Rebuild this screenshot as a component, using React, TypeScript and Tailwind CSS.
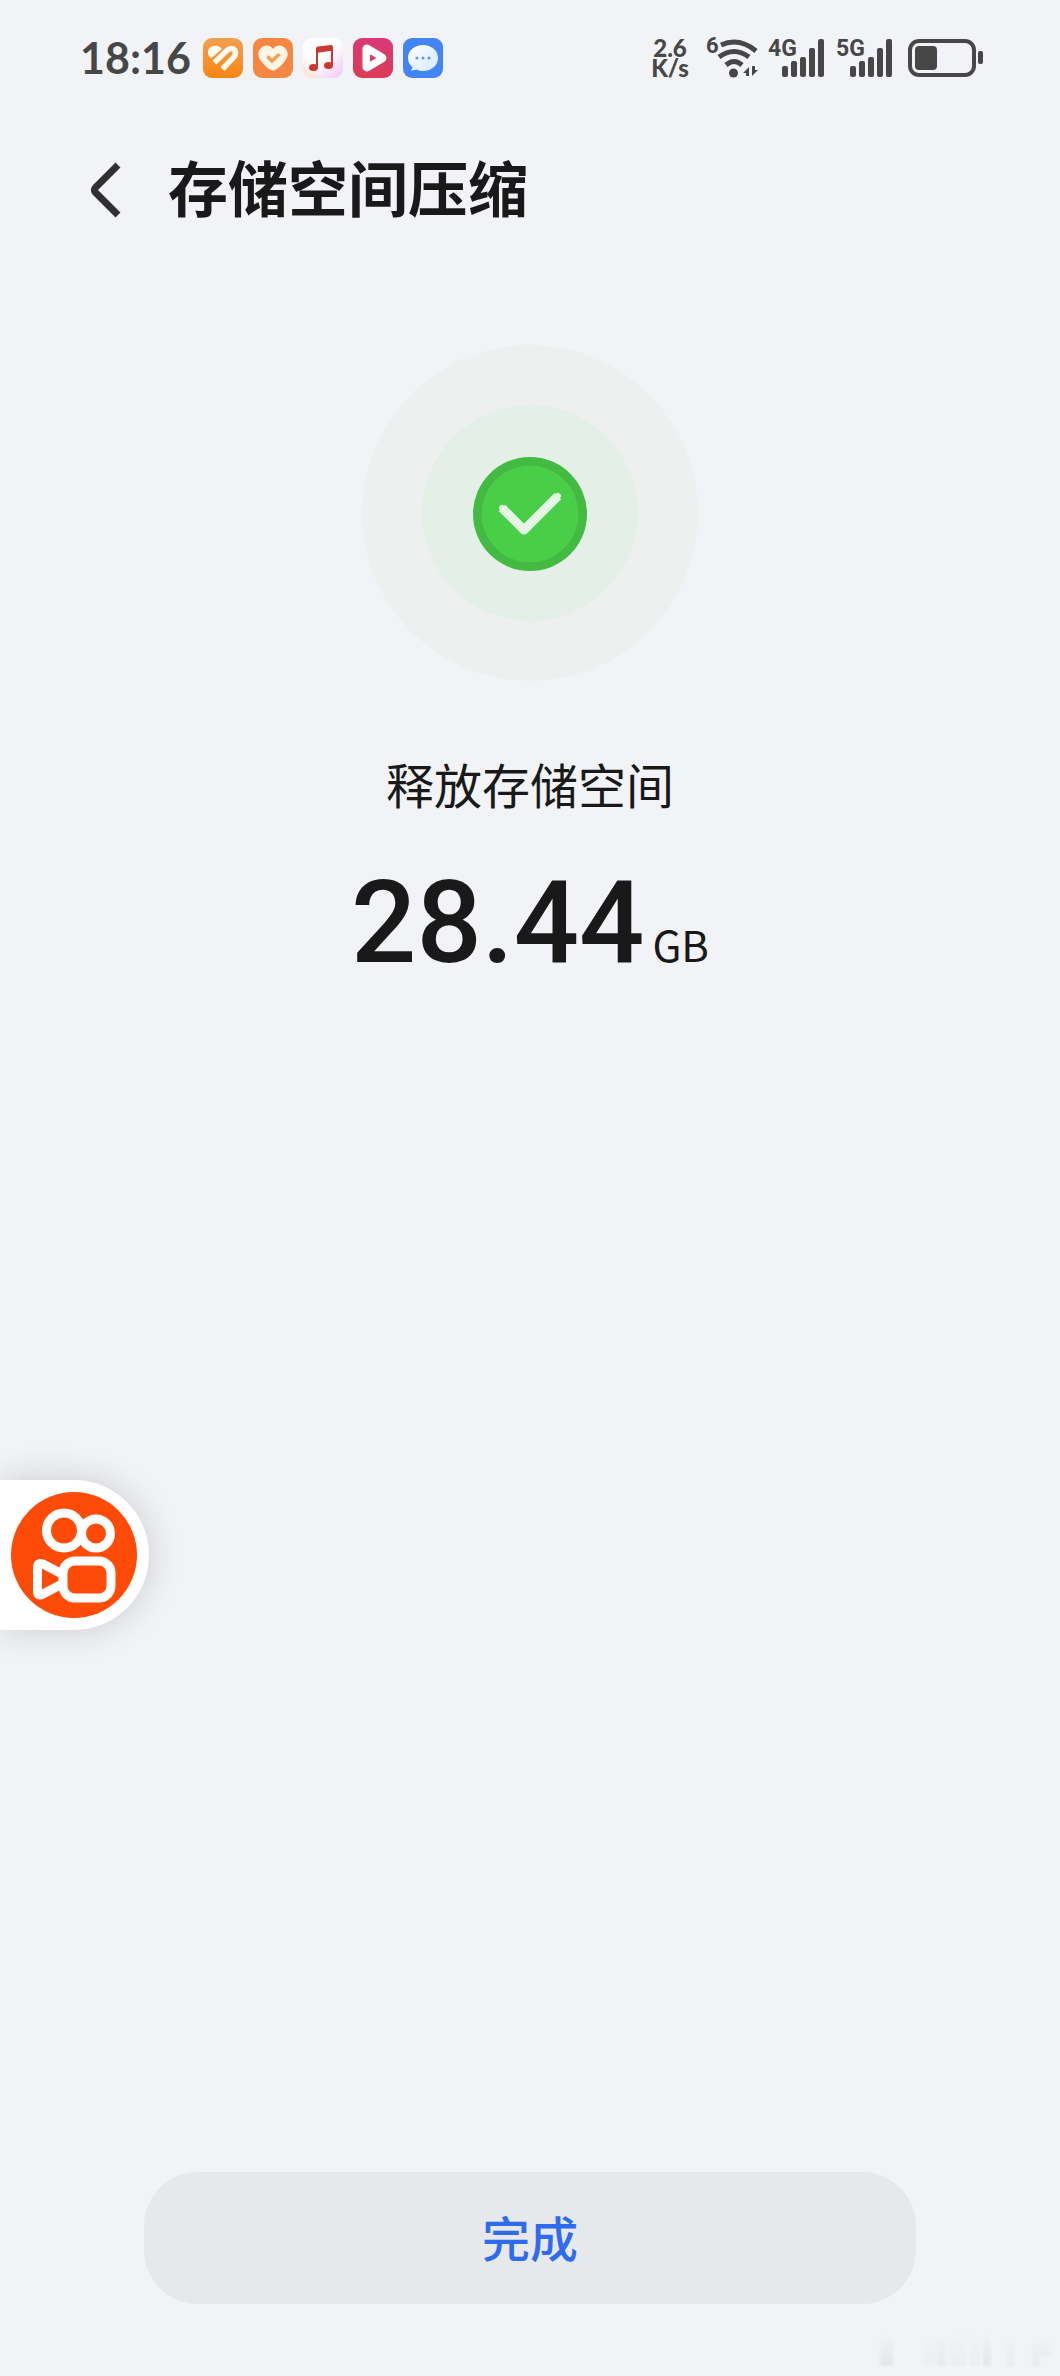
import React from 'react';

const AppIcons: React.FC = () => (
  <div className="flex gap-[10px]">
    <svg className="size-10" viewBox="0 0 40 40" aria-hidden="true">
      <defs>
        <linearGradient id="orange" x1="0" y1="0" x2="0" y2="1">
          <stop offset="0" stopColor="#f0a050" />
          <stop offset="1" stopColor="#fb8412" />
        </linearGradient>
      </defs>
      <rect width="40" height="40" rx="9" fill="url(#orange)" />
      <path d="M5.500 17 C3.500 11 8 7 13.500 7.800 Q17 8.300 19 11 L8.500 20 Q6.500 19.500 5.500 17 Z" fill="#fffaf0" />
      <path
        d="M11.500 24.500 L24 12.500 Q29 8.500 32 12.500 Q33.500 16 31 18.800 L19.500 31"
        fill="none"
        stroke="#fffaf0"
        strokeWidth="5.500"
        strokeLinejoin="round"
      />
    </svg>
    <svg className="size-10" viewBox="0 0 40 40" aria-hidden="true">
      <rect width="40" height="40" rx="9" fill="#f58743" />
      <path
        d="M20 11 C23 6.500 29 6.500 32 10 C36 14 35 19 32 23 C29 27 25 30.500 22 32 Q20 33 18 32 C15 30.500 11 27 8 23 C5 19 4 14 8 10 C11 6.500 17 6.500 20 11 Z"
        fill="#fff5e4"
      />
      <path d="M14.500 18.500 L19 23 L26.500 16" fill="none" stroke="#f0a05f" strokeWidth="3.500" />
    </svg>
    <svg className="size-10" viewBox="0 0 40 40" aria-hidden="true">
      <defs>
        <linearGradient id="music" x1="0" y1="0" x2="1" y2="1">
          <stop offset="0.500" stopColor="#ffffff" />
          <stop offset="1" stopColor="#f3c4f6" />
        </linearGradient>
        <linearGradient id="peach" x1="1" y1="0" x2="0" y2="1">
          <stop offset="0.700" stopColor="#ffd9c4" stopOpacity="0" />
          <stop offset="1" stopColor="#ffd9c4" />
        </linearGradient>
      </defs>
      <rect width="40" height="40" rx="9" fill="url(#music)" />
      <rect width="40" height="40" rx="9" fill="url(#peach)" />
      <path d="M13 10.500 Q13 8.500 15 8.500 L28 7 Q30 7 30 9 L30 12.500 L13 15 Z" fill="#cb382f" />
      <path d="M14 11 L14 29 M29 9 L29 27" stroke="#cb382f" strokeWidth="2" />
      <ellipse cx="10.500" cy="29.500" rx="4.500" ry="3.500" fill="#cb382f" />
      <ellipse cx="25.500" cy="27.500" rx="4.500" ry="3.500" fill="#cb382f" />
    </svg>
    <svg className="size-10" viewBox="0 0 40 40" aria-hidden="true">
      <defs>
        <linearGradient id="video" x1="0" y1="0" x2="0" y2="1">
          <stop offset="0" stopColor="#d93a78" />
          <stop offset="1" stopColor="#dc3a55" />
        </linearGradient>
      </defs>
      <rect width="40" height="40" rx="9" fill="url(#video)" />
      <path d="M14 11 L29 20 L14 29 Z" fill="#fff" stroke="#fff" strokeWidth="9" strokeLinejoin="round" />
      <path d="M17.500 17 L22.500 20 L17.500 23 Z" fill="#dc3a62" stroke="#dc3a62" strokeWidth="1" strokeLinejoin="round" />
    </svg>
    <svg className="size-10" viewBox="0 0 40 40" aria-hidden="true">
      <defs>
        <linearGradient id="bubble" x1="0" y1="0" x2="1" y2="1">
          <stop offset="0" stopColor="#ffffff" />
          <stop offset="1" stopColor="#d3e9ff" />
        </linearGradient>
      </defs>
      <rect width="40" height="40" rx="9" fill="#4385f5" />
      <path
        d="M20 7 C28.500 7 35 12.500 35 20 C35 27.500 28.500 33 20 33 Q16.500 33 13.500 31.500 Q11 32.500 7.500 32.500 Q9.500 31 9.500 29 Q5 25.500 5 20 C5 12.500 11.500 7 20 7 Z"
        fill="url(#bubble)"
      />
      <g fill="#5b9bf3">
        <circle cx="14" cy="20" r="1.500" />
        <circle cx="20" cy="20" r="1.500" />
        <circle cx="26" cy="20" r="1.500" />
      </g>
    </svg>
  </div>
);

const Signal: React.FC<{ label: string }> = ({ label }) => (
  <div className="relative h-[38px] w-[57px]">
    <span className="absolute top-0 left-0 font-[Roboto] text-[23px] leading-[20px] font-bold">{label}</span>
    <svg className="absolute right-0 bottom-0 h-[38px] w-[44px]" viewBox="0 0 44 38" fill="#474747" aria-hidden="true">
      <rect x="1" y="27" width="6" height="11" rx="2" />
      <rect x="10" y="22" width="6" height="16" rx="2" />
      <rect x="19" y="18" width="6" height="20" rx="2" />
      <rect x="28" y="9" width="6" height="29" rx="2" />
      <rect x="37" y="0" width="6" height="38" rx="2" />
    </svg>
  </div>
);

const StatusBar: React.FC = () => (
  <div className="flex h-[116px] items-center justify-between pr-[76px] pl-[80px] text-[#474747]">
    <div className="flex items-center gap-3">
      <time className="font-[Lato] text-[43px] leading-[48px] font-bold">18:16</time>
      <AppIcons />
    </div>
    <div className="flex items-center">
      <div className="w-[40px] text-center font-[Lato] text-[24px] leading-[20px] font-black">
        2.6
        <br />
        K/s
      </div>
      <div className="relative ml-4 h-[40px] w-[52px]">
        <span className="absolute top-0 left-0 font-[Roboto] text-[22px] leading-[16px] font-bold">6</span>
        <svg className="absolute right-0 bottom-0 h-[40px] w-[43px]" viewBox="0 0 43 40" aria-hidden="true">
          <g fill="none" stroke="#474747" strokeWidth="5">
            <path d="M6 7 Q24 -1 41 13" />
            <path d="M4 19 Q19 8 34 19" />
            <path d="M11 27 Q19 20 27 27" />
          </g>
          <circle cx="18.500" cy="35" r="4.500" fill="#474747" />
          <path d="M34 29 L34 38 L31 38 L31 35 L28 35 Z M37 38 L37 28 L40 28 L40 32 L43 32 Z" fill="#474747" />
        </svg>
      </div>
      <div className="ml-[10px] flex gap-[11px]">
        <Signal label="4G" />
        <Signal label="5G" />
      </div>
      <svg className="ml-[15px] h-[38px] w-[76px]" viewBox="0 0 76 38" aria-hidden="true">
        <rect x="2" y="2" width="64" height="34" rx="9" fill="none" stroke="#474747" strokeWidth="4" />
        <rect x="7" y="7" width="22" height="24" rx="4" fill="#474747" />
        <rect x="70" y="12" width="5" height="13" rx="2" fill="#474747" />
      </svg>
    </div>
  </div>
);

const SuccessBadge: React.FC = () => (
  <svg className="size-[336px]" viewBox="0 0 336 336" role="img" aria-label="完成">
    <circle cx="168" cy="168" r="168" fill="#edf0ef" />
    <circle cx="168" cy="168" r="108" fill="#e4efe7" />
    <circle cx="168" cy="169" r="57" fill="#43ba41" />
    <circle cx="168" cy="169" r="48" fill="#49ce47" stroke="#5fce5c" strokeWidth="0.500" />
    <path d="M140 163 L162 185 L196 151" fill="none" stroke="#e3f7e3" strokeWidth="9" strokeLinejoin="round" />
    <path d="M140 163 L162 185 L196 151" fill="none" stroke="#e3f7e3" strokeWidth="6" strokeLinecap="round" strokeLinejoin="round" />
  </svg>
);

const FloatingShortcut: React.FC = () => (
  <button
    aria-label="快手"
    className="absolute top-[1480px] left-0 flex h-[150px] w-[149px] items-center justify-end rounded-r-full bg-white pr-3 shadow-[0_0_36px_rgba(0,0,0,0.16)]"
  >
    <svg className="size-[126px]" viewBox="0 0 126 126" aria-hidden="true">
      <circle cx="63" cy="63" r="63" fill="#ff4b08" />
      <g fill="none" stroke="#fff" strokeWidth="9" strokeLinejoin="round">
        <circle cx="53" cy="38.500" r="17.500" />
        <circle cx="85" cy="41.500" r="14.500" />
        <rect x="52" y="69" width="48" height="37" rx="12" />
        <path d="M51 82 L32 72 Q26.500 70 26.500 76 L26.500 99 Q26.500 105 32 102 L51 92" />
      </g>
    </svg>
  </button>
);

// Faint residue in the bottom corner
const CornerTrace: React.FC = () => (
  <svg className="absolute right-0 bottom-2 h-[36px] w-[190px] opacity-70 blur-[1px]" viewBox="0 0 190 36" aria-hidden="true">
    <defs>
      <linearGradient id="trace" x1="0" y1="0" x2="0" y2="1">
        <stop offset="0" stopColor="#dfe0e3" stopOpacity="0" />
        <stop offset="1" stopColor="#dfe0e3" />
      </linearGradient>
    </defs>
    <g fill="url(#trace)">
      <rect x="10" y="2" width="13" height="32" />
      <rect x="52" y="2" width="16" height="32" opacity="0.300" />
      <rect x="68" y="2" width="8" height="32" opacity="0.700" />
      <rect x="79" y="2" width="17" height="32" opacity="0.400" />
      <rect x="100" y="2" width="10" height="32" opacity="0.400" />
      <rect x="113" y="2" width="8" height="32" />
      <rect x="137" y="2" width="7" height="32" opacity="0.500" />
      <rect x="162" y="2" width="8" height="32" opacity="0.600" />
      <rect x="170" y="6" width="11" height="18" opacity="0.500" />
    </g>
  </svg>
);

const App: React.FC = () => {
  return (
    <div className="relative flex min-h-screen flex-col overflow-hidden bg-[#f1f3f7] font-['Noto_Sans_CJK_SC',sans-serif] text-[#191919]">
      <StatusBar />

      <header className="flex h-[148px] items-center pl-[84px]">
        <button aria-label="返回" className="flex h-20 w-[84px] items-center">
          <svg className="h-[60px] w-[44px]" viewBox="0 0 44 60" aria-hidden="true">
            <path d="M34 5 L12 27 Q9 30 12 33 L34 55" fill="none" stroke="#303030" strokeWidth="7" strokeLinejoin="round" />
          </svg>
        </button>
        <h1 className="pb-2 text-[60px] leading-[80px] font-bold">存储空间压缩</h1>
      </header>

      <main className="flex flex-col items-center pt-[81px]">
        <SuccessBadge />
        <p className="mt-[68px] text-[48px] leading-[68px]">释放存储空间</p>
        <p className="mt-9 flex items-baseline gap-2">
          <span className="font-[Roboto] text-[115px] leading-[140px] font-medium">28.44</span>
          <span className="text-[42px] leading-[60px]">GB</span>
        </p>
      </main>

      <footer className="mt-auto px-[144px] pb-[72px]">
        <button className="h-[132px] w-full rounded-[54px] bg-[#e6e8ea] pb-1 text-[48px] font-medium text-[#2f6bed]">完成</button>
      </footer>

      <FloatingShortcut />
      <CornerTrace />
    </div>
  );
};

export default App;
